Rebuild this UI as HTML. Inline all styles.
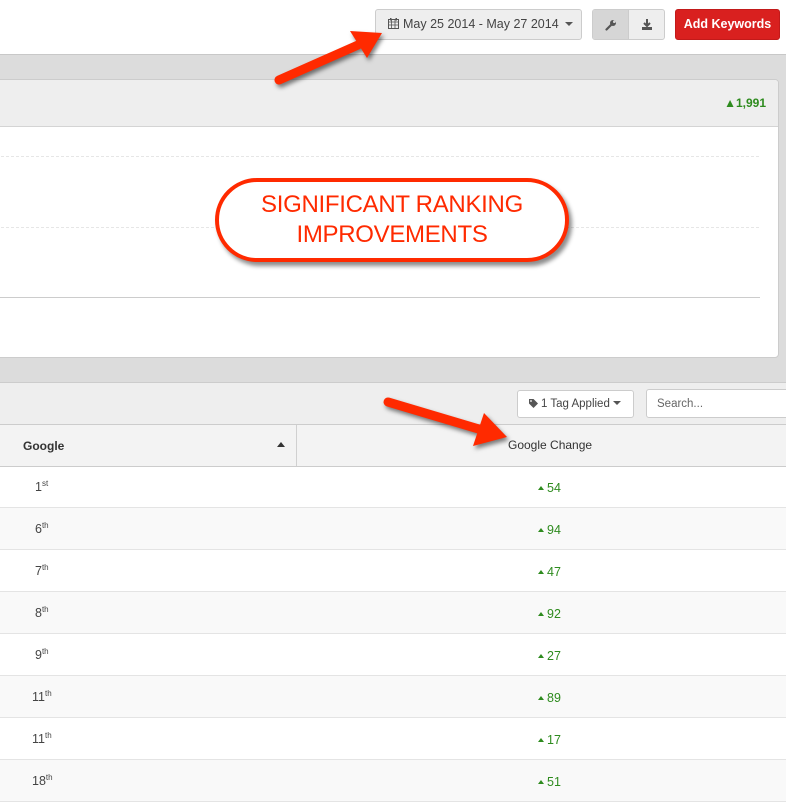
<!DOCTYPE html>
<html><head><meta charset="utf-8"><style>
*{margin:0;padding:0;box-sizing:border-box}
body{width:786px;height:805px;overflow:hidden;background:#fff;font-family:"Liberation Sans",sans-serif;position:relative;color:#333}
.abs{position:absolute}
.btn{position:absolute;border:1px solid #ccc;border-radius:3px;background:#eee;font-size:12px;color:#444}
.row{position:absolute;left:0;width:786px;height:42px;border-bottom:1px solid #e4e4e4}
.rk{position:absolute;left:35px;top:14px;font-size:12.5px;color:#444}
.rk sup{font-size:8px;vertical-align:5px;line-height:0}
.ch{position:absolute;left:538px;top:15px;font-size:12.5px;color:#2e8b1e}
.ch:before{content:"";display:inline-block;border-left:3px solid transparent;border-right:3px solid transparent;border-bottom:4px solid #2e8b1e;margin-right:3px;vertical-align:2px}
</style></head><body>
<div class="btn" style="left:375px;top:9px;width:207px;height:31px;padding:7px 0 0 12px;font-size:12.5px">
<svg width="11" height="11" style="vertical-align:-1px;margin-right:4px" viewBox="0 0 11 11"><rect x="0.5" y="1.5" width="10" height="9" fill="none" stroke="#555"/><path d="M0 4h11M3.5 2v9M7 2v9M0 7h11" stroke="#555" stroke-width="0.8"/><rect x="2" y="0" width="1.5" height="2.5" fill="#555"/><rect x="7.5" y="0" width="1.5" height="2.5" fill="#555"/></svg>May 25 2014 - May 27 2014 <span style="display:inline-block;border-left:4px solid transparent;border-right:4px solid transparent;border-top:4px solid #555;vertical-align:2px;margin-left:3px"></span></div>
<div class="btn" style="left:592px;top:9px;width:73px;height:31px;overflow:hidden">
<div class="abs" style="left:0;top:0;width:36px;height:31px;background:#d6d6d6;border-right:1px solid #ccc"></div>
<svg class="abs" style="left:12px;top:9px" width="12" height="12" viewBox="0 0 12 12"><path d="M1.5 10.5L6.5 5.5" stroke="#555" stroke-width="2.2" stroke-linecap="round"/><circle cx="8" cy="4" r="3" fill="#555"/><circle cx="9.3" cy="2.7" r="1.3" fill="#d6d6d6"/></svg>
<svg class="abs" style="left:48px;top:9px" width="12" height="12" viewBox="0 0 12 12"><path d="M6 0v6M3 4l3 3 3-3" stroke="#555" stroke-width="2" fill="none"/><rect x="1" y="8" width="10" height="3" fill="#555"/></svg>
</div>
<div class="abs" style="left:675px;top:9px;width:105px;height:31px;background:#d9201f;border:1px solid #c21a1a;border-radius:3px;color:#fff;font-size:12.5px;font-weight:bold;text-align:center;line-height:29px">Add Keywords</div>
<div class="abs" style="left:0;top:54px;width:786px;height:329px;background:#dcdcdc;border-top:1px solid #c8c8c8"></div>
<div class="abs" style="left:-5px;top:79px;width:784px;height:279px;background:#fff;border:1px solid #ccc;border-radius:4px;overflow:hidden">
<div class="abs" style="left:0;top:0;width:784px;height:47px;background:#eee;border-bottom:1px solid #d4d4d4"></div>
<div class="abs" style="right:12px;top:16px;font-size:12px;font-weight:bold;color:#2e8b1e">▲1,991</div>
<div class="abs" style="left:0;top:76px;width:763px;border-top:1px dashed #e6e6e6"></div>
<div class="abs" style="left:0;top:147px;width:763px;border-top:1px dashed #e6e6e6"></div>
<div class="abs" style="left:0;top:217px;width:764px;border-top:1px solid #ccc"></div>
</div>
<div class="abs" style="left:215px;top:178px;width:354px;height:84px;border:4px solid #ff2a00;border-radius:42px;background:#fff;box-shadow:3px 4px 4px rgba(0,0,0,0.45);text-align:center;color:#ff2a00;font-size:24px;line-height:30px;padding-top:8px;letter-spacing:-0.3px">SIGNIFICANT RANKING<br>IMPROVEMENTS</div>
<div class="abs" style="left:0;top:382px;width:786px;height:43px;background:#eee;border-top:1px solid #ccc;border-bottom:1px solid #ccc"></div>
<div class="abs" style="left:517px;top:390px;width:117px;height:28px;background:#fff;border:1px solid #ccc;border-radius:3px;font-size:11.5px;color:#444;padding:7px 0 0 11px">
<svg width="9" height="9" viewBox="0 0 9 9" style="vertical-align:-1px;margin-right:3px"><path d="M0 0h4.5l4.5 4.5-4.5 4.5L0 4.5z" fill="#555"/><circle cx="2" cy="2" r="0.9" fill="#fff"/></svg>1 Tag Applied <span style="display:inline-block;border-left:4px solid transparent;border-right:4px solid transparent;border-top:4px solid #555;vertical-align:2px"></span></div>
<div class="abs" style="left:646px;top:389px;width:150px;height:29px;background:#fff;border:1px solid #ccc;border-radius:3px;font-size:11.5px;color:#666;padding:8px 0 0 10px">Search...</div>
<div class="abs" style="left:0;top:425px;width:786px;height:42px;background:#f3f3f3;border-bottom:1px solid #ccc"></div>
<div class="abs" style="left:296px;top:425px;height:41px;border-left:1px solid #d0d0d0"></div>
<div class="abs" style="left:23px;top:439px;font-size:12px;font-weight:bold;color:#333">Google</div>
<div class="abs" style="left:277px;top:442px;border-left:4px solid transparent;border-right:4px solid transparent;border-bottom:5px solid #333"></div>
<div class="abs" style="left:508px;top:438px;font-size:12px;color:#333">Google Change</div>
<div class="row" style="top:467px;height:41px;background:#fff"><span class="rk" style="top:13px">1<sup>st</sup></span><span class="ch" style="top:14px">54</span></div>
<div class="row" style="top:508px;background:#f9f9f9"><span class="rk">6<sup>th</sup></span><span class="ch">94</span></div>
<div class="row" style="top:550px;background:#fff"><span class="rk">7<sup>th</sup></span><span class="ch">47</span></div>
<div class="row" style="top:592px;background:#f9f9f9"><span class="rk">8<sup>th</sup></span><span class="ch">92</span></div>
<div class="row" style="top:634px;background:#fff"><span class="rk">9<sup>th</sup></span><span class="ch">27</span></div>
<div class="row" style="top:676px;background:#f9f9f9"><span class="rk" style="left:32px">11<sup>th</sup></span><span class="ch">89</span></div>
<div class="row" style="top:718px;background:#fff"><span class="rk" style="left:32px">11<sup>th</sup></span><span class="ch">17</span></div>
<div class="row" style="top:760px;background:#f9f9f9"><span class="rk" style="left:32px">18<sup>th</sup></span><span class="ch">51</span></div>
<svg class="abs" style="left:0;top:0;filter:drop-shadow(2px 3px 2px rgba(0,0,0,0.5))" width="786" height="805">
<line x1="279" y1="80" x2="358" y2="45" stroke="#ff2a00" stroke-width="9" stroke-linecap="round"/>
<polygon points="382,33 350,31 367,58" fill="#ff2a00"/>
<line x1="388" y1="402" x2="482" y2="430" stroke="#ff2a00" stroke-width="9" stroke-linecap="round"/>
<polygon points="507,437 484,413 473,446" fill="#ff2a00"/>
</svg>
</body></html>
